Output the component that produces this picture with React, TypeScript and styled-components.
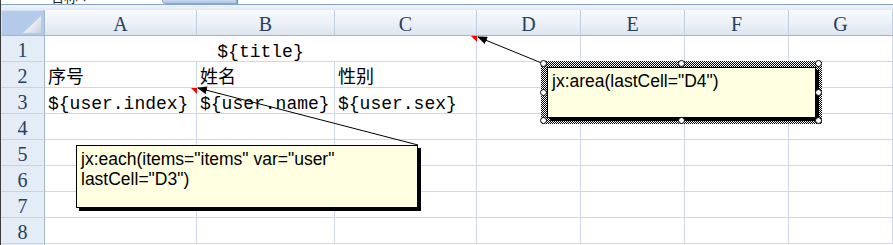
import React from "react";
import styled, { createGlobalStyle, css } from "styled-components";

const Global = createGlobalStyle`
  html, body { margin: 0; padding: 0; background: #fff; overflow: hidden; }
  body { width: 893px; height: 245px; }
`;

const Page = styled.div`
  position: relative;
  width: 893px;
  height: 245px;
  overflow: hidden;
  background: linear-gradient(to right, #e4ecf7 0 43px, #9eb6ce 43px 44px, #fff 44px);
  border-left: 1px solid #3c3c3c;
  box-sizing: border-box;
  font-family: "Liberation Mono", "Noto Sans CJK SC", monospace;
`;

const NameBar = styled.div`
  display: flex;
  height: 4px;
  overflow: hidden;
  background: #fff;
  border-bottom: 1px solid #8aa4c6;
`;

const NameText = styled.span`
  flex: none;
  margin-left: 49px;
  width: 112px;
  height: 14px;
  margin-top: -11px;
  font: 14px/14px "Noto Sans CJK SC", sans-serif;
  color: #222;
  white-space: nowrap;
`;

const NameTab = styled.div`
  flex: none;
  width: 75px;
  height: 4px;
  box-sizing: border-box;
  background: linear-gradient(#c9daf0, #a9c3e6);
  border: 1px solid #8ea9cf;
  border-top: none;
  border-radius: 0 0 0 6px;
`;

const NameDivider = styled.div`
  flex: none;
  width: 1px;
  background: #6f8db5;
`;

const NameRest = styled.div`
  flex: 1;
  background: #fff;
`;

const Strip = styled.div`
  height: 5px;
  background: linear-gradient(#eef3fa, #e3eaf4);
`;

const Sheet = styled.div`
  display: grid;
  grid-template-columns: 44px 152px 138px 142px 104px 104px 104px 104px;
  grid-auto-rows: 26px;
  background: #fff;
`;

const Corner = styled.div`
  position: relative;
  box-sizing: border-box;
  background: #b3caea;
  border: 1px solid #d5e2f3;
  border-right: 1px solid #9eb6ce;
  border-bottom: 1px solid #9eb6ce;
  &::after {
    content: "";
    position: absolute;
    right: 3px;
    bottom: 2px;
    width: 18px;
    height: 17px;
    background: linear-gradient(135deg, #ffffff 20%, #c6d1df 100%);
    clip-path: polygon(100% 0, 100% 100%, 0 100%);
  }
`;

const ColHead = styled.div`
  box-sizing: border-box;
  display: flex;
  align-items: center;
  justify-content: center;
  padding-top: 3px;
  background: linear-gradient(#f8fafd 0%, #edf2f8 45%, #dde5ef 100%);
  border-right: 1px solid #c0cfe2;
  border-bottom: 1px solid #9eb6ce;
  font: 20px/20px "Liberation Serif", serif;
  color: #27405f;
`;

const RowHead = styled.div`
  box-sizing: border-box;
  display: flex;
  align-items: center;
  justify-content: center;
  padding-top: 3px;
  background: #e4ecf7;
  border-right: 1px solid #9eb6ce;
  border-bottom: 1px solid #c5d3e5;
  font: 20px/20px "Liberation Serif", serif;
  color: #27405f;
`;

const Cell = styled.div<{ $span?: number; $center?: boolean; $note?: boolean }>`
  position: relative;
  box-sizing: border-box;
  grid-column: span ${(p) => p.$span ?? 1};
  display: flex;
  align-items: flex-end;
  justify-content: ${(p) => (p.$center ? "center" : "flex-start")};
  padding: 0 3px;
  border-right: 1px solid #d0d7e5;
  border-bottom: 1px solid #d0d7e5;
  font-size: 18px;
  line-height: 18px;
  white-space: nowrap;
  color: #000;
  ${(p) =>
    p.$note &&
    css`
      &::after {
        content: "";
        position: absolute;
        top: 0;
        right: -1px;
        width: 0;
        height: 0;
        border-style: solid;
        border-width: 0 6px 6px 0;
        border-color: transparent #f00 transparent transparent;
      }
    `}
`;

const Arrows = styled.svg`
  position: absolute;
  left: -1px;
  top: 0;
  pointer-events: none;
`;

const NoteBox = styled.div`
  box-sizing: border-box;
  background: #ffffe1;
  border: 1px solid #000;
  box-shadow: 3px 3px 0 #000;
  padding: 3px 4px;
  font: 17.5px/20px "Liberation Sans", Arial, sans-serif;
  color: #000;
  white-space: nowrap;
`;

const FloatingNote = styled(NoteBox)<{ $x: number; $y: number; $w: number; $h: number }>`
  position: absolute;
  left: ${(p) => p.$x - 1}px;
  top: ${(p) => p.$y}px;
  width: ${(p) => p.$w}px;
  height: ${(p) => p.$h}px;
`;

const SelectionFrame = styled.div<{ $x: number; $y: number; $w: number; $h: number }>`
  position: absolute;
  box-sizing: border-box;
  left: ${(p) => p.$x - 1}px;
  top: ${(p) => p.$y}px;
  width: ${(p) => p.$w}px;
  height: ${(p) => p.$h}px;
  padding: 6px;
  background-color: #fff;
  background-image: repeating-conic-gradient(#000 0 25%, #fff 0 50%);
  background-size: 2px 2px;
  ${NoteBox} {
    width: 100%;
    height: 100%;
  }
`;

const Handle = styled.span<{ $x: number; $y: number }>`
  position: absolute;
  left: ${(p) => p.$x - 3.5}px;
  top: ${(p) => p.$y - 3.5}px;
  width: 7px;
  height: 7px;
  box-sizing: border-box;
  border: 1px solid #000;
  border-radius: 50%;
  background: #fff;
`;

const columns = ["A", "B", "C", "D", "E", "F", "G"];

type RowDef = { n: number; cells: React.ReactNode[] };

const empty = () => columns.map((c) => <Cell key={c} />);

const rows: RowDef[] = [
  {
    n: 1,
    cells: [
      <Cell key="t" $span={3} $center $note>
        {"${title}"}
      </Cell>,
      <Cell key="D" />,
      <Cell key="E" />,
      <Cell key="F" />,
      <Cell key="G" />,
    ],
  },
  {
    n: 2,
    cells: [
      <Cell key="A">序号</Cell>,
      <Cell key="B">姓名</Cell>,
      <Cell key="C">性别</Cell>,
      <Cell key="D" />,
      <Cell key="E" />,
      <Cell key="F" />,
      <Cell key="G" />,
    ],
  },
  {
    n: 3,
    cells: [
      <Cell key="A" $note>
        {"${user.index}"}
      </Cell>,
      <Cell key="B">{"${user.name}"}</Cell>,
      <Cell key="C">{"${user.sex}"}</Cell>,
      <Cell key="D" />,
      <Cell key="E" />,
      <Cell key="F" />,
      <Cell key="G" />,
    ],
  },
  ...[4, 5, 6, 7, 8].map((n) => ({ n, cells: empty() })),
];

const handles = [
  [2, 2],
  [140, 2],
  [277, 2],
  [2, 31],
  [277, 31],
  [2, 59],
  [140, 59],
  [277, 59],
];

export default function App() {
  return (
    <>
      <Global />
      <Page>
        <NameBar>
          <NameText>名称 ▾</NameText>
          <NameTab />
          <NameDivider />
          <NameRest />
        </NameBar>
        <Strip />
        <Sheet>
          <Corner />
          {columns.map((c) => (
            <ColHead key={c}>{c}</ColHead>
          ))}
          {rows.map((r) => (
            <React.Fragment key={r.n}>
              <RowHead>{r.n}</RowHead>
              {r.cells}
            </React.Fragment>
          ))}
        </Sheet>

        <Arrows width={893} height={245} viewBox="0 0 893 245">
          <defs>
            <marker
              id="ah"
              markerWidth="10"
              markerHeight="8"
              refX="9"
              refY="4"
              orient="auto"
              markerUnits="userSpaceOnUse"
            >
              <path d="M0,0 L10,4 L0,8 z" fill="#000" />
            </marker>
          </defs>
          <line x1={544} y1={64} x2={478} y2={37} stroke="#000" strokeWidth={1} markerEnd="url(#ah)" />
          <line x1={418} y1={145} x2={198} y2={88} stroke="#000" strokeWidth={1} markerEnd="url(#ah)" />
        </Arrows>

        <FloatingNote $x={76} $y={145} $w={342} $h={63}>
          jx:each(items="items" var="user"
          <br />
          lastCell="D3")
        </FloatingNote>

        <SelectionFrame $x={541} $y={61} $w={281} $h={63}>
          <NoteBox>jx:area(lastCell="D4")</NoteBox>
          {handles.map(([x, y], i) => (
            <Handle key={i} $x={x} $y={y} />
          ))}
        </SelectionFrame>
      </Page>
    </>
  );
}
